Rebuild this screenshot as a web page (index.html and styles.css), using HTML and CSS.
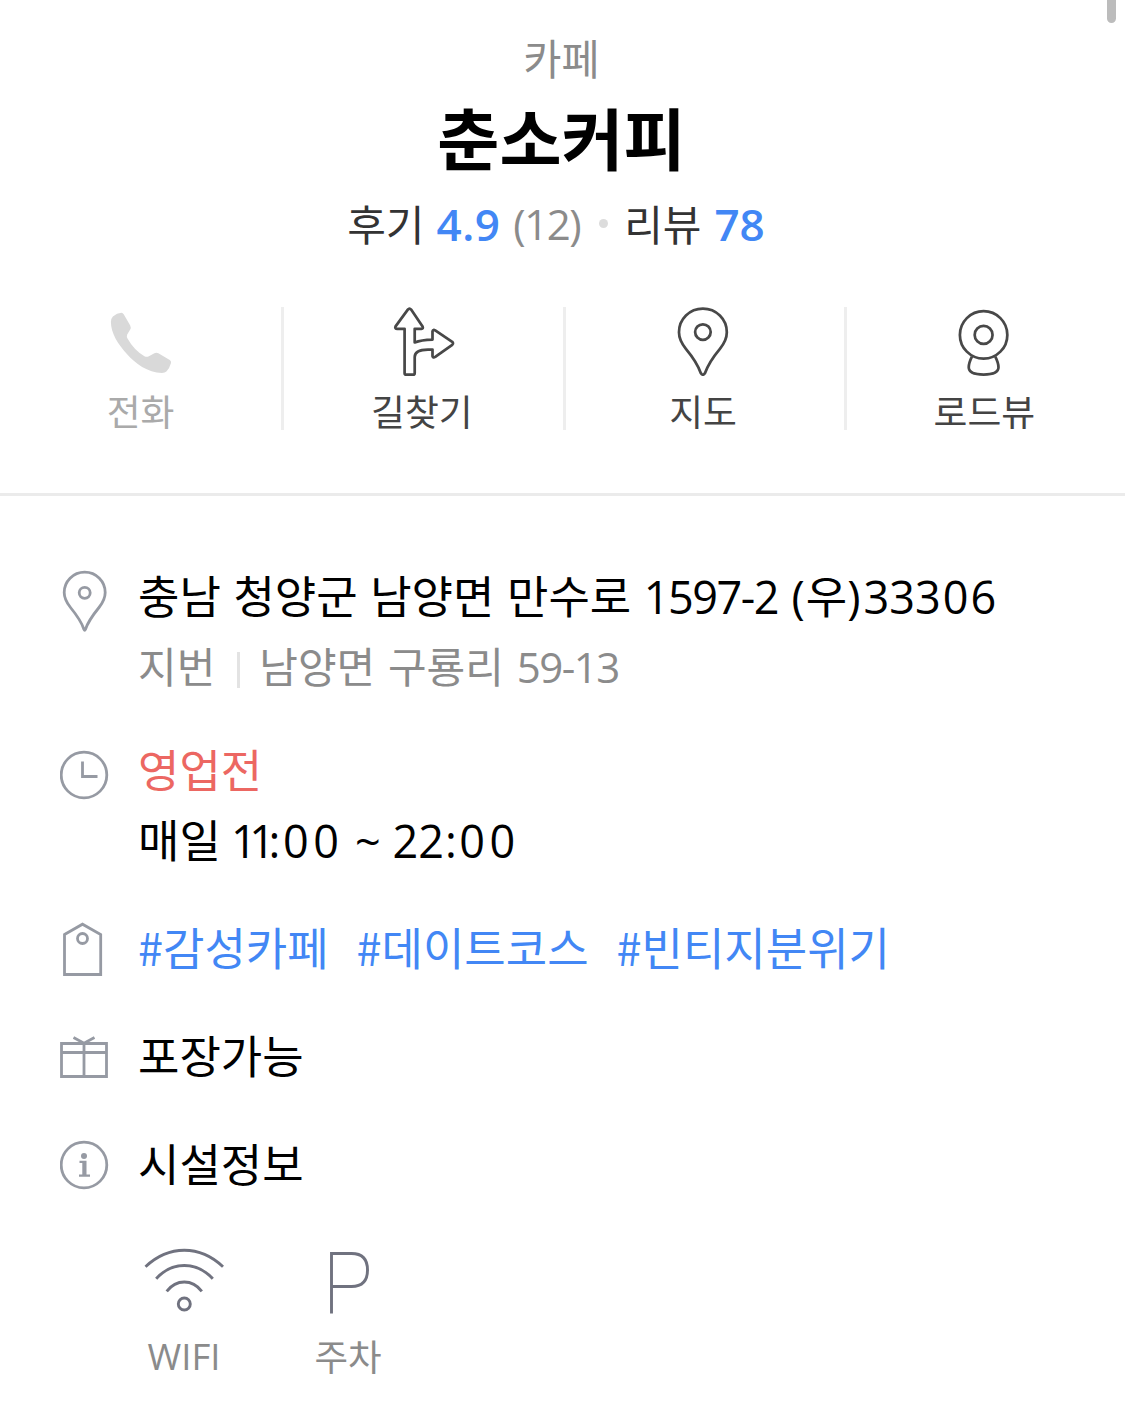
FILE: index.html
```html
<!DOCTYPE html>
<html lang="ko">
<head>
<meta charset="utf-8">
<title>춘소커피</title>
<link rel="stylesheet" href="styles.css">
</head>
<body>
<div class="scroll-thumb"></div>
<header class="place">
  <div class="category">카페</div>
  <h1 class="name">춘소커피</h1>
  <div class="rating">
    <span class="rate-label">후기</span><b class="score">4.9</b><span class="count">(12)</span><i class="dot"></i><span class="rate-label">리뷰</span><b class="reviews">78</b>
  </div>
  <nav class="actions">
    <a class="action disabled">
      <svg class="action-icon" viewBox="105.100 306 72 72"><path fill="#d9d9d9" d="M113 316.500Q117 313 121.500 312.800Q123 312.900 123.800 314.300L130.300 325.500Q131.300 327.500 130.300 329.500L127.300 334.500Q126.500 336.500 127.600 338.500Q134 350 144.500 356.300Q146.500 357.300 148.500 356.500L154.500 353.200Q156.500 352.400 158.500 353.300L169.800 359.900Q171.500 361 171.100 363Q169.800 368 166.500 371.500Q165 372.900 162 373C148 373 135 363 127 354C118 344 111 333 111 322Q111 318.500 113 316.500Z"/></svg>
      <span class="action-label">전화</span>
    </a>
    <a class="action">
      <svg class="action-icon line" viewBox="385.900 305.500 72 72"><path d="M407.300 309.200Q409 307 410.700 309.200L422.500 326.500Q423.500 328.900 421.300 329H414.400V343Q421 340.300 432.700 340V331.500Q433.300 329.300 435.500 330.600L453 342.300Q454.600 343.900 453 345.400L435.500 357.900Q433.300 359.200 432.700 357V350.300H428Q414.400 350.300 414.400 358V374.600Q414.400 376.100 412.800 376.100H405.600Q404 376.100 404 374.600V329H396.500Q393.600 328.900 394.700 326.500Z"/></svg>
      <span class="action-label">길찾기</span>
    </a>
    <a class="action">
      <svg class="action-icon line" viewBox="667.100 305.500 72 72"><path d="M703 308.200C689.300 308.200 678.400 319 678.400 332.500C678.400 339.500 681 344 685.500 349.500C693 358.500 697.500 365 700.800 374.400Q703 378 705.200 374.400C708.500 365 713 358.500 720.500 349.500C725 344 727.600 339.500 727.600 332.500C727.600 319 716.700 308.200 703 308.200Z"/><circle cx="703" cy="332.300" r="8"/></svg>
      <span class="action-label">지도</span>
    </a>
    <a class="action">
      <svg class="action-icon line" viewBox="948.400 305.500 72 72"><circle cx="984" cy="335.200" r="24.400"/><circle cx="984" cy="335.200" r="9.200"/><path d="M972 357.500Q968.700 364 968.700 368.500C968.700 374.300 976 376 984 376S999.300 374.300 999.300 368.500Q999.300 364 996 357.500"/></svg>
      <span class="action-label">로드뷰</span>
    </a>
  </nav>
</header>
<main class="info">
  <section class="row address">
    <svg class="row-icon" viewBox="60 561 50 72"><path d="M84.700 572.200C73 572.200 64.200 581.500 64.200 592.500C64.200 598.500 66.500 602.500 70.500 607.500C77 615.500 81.500 621.500 84 629.500Q84.700 631 85.400 629.500C88 621.500 92.500 615.500 99 607.500C103 602.500 105.200 598.500 105.200 592.500C105.200 581.500 96.400 572.200 84.700 572.200Z"/><circle cx="84.700" cy="592.800" r="5.500"/></svg>
    <div class="lines">
      <div class="line">충남 청양군 남양면 만수로 <span class="lat street">1597-2</span> <span class="lat open">(</span>우<span class="lat"><span class="close">)</span>33<span class="zip">30</span>6</span></div>
      <div class="line sub">지번<i class="bar"></i>남양면 구룡리 <span class="lat lot">59-13</span></div>
    </div>
  </section>
  <section class="row hours">
    <svg class="row-icon" viewBox="60 735 50 72"><circle cx="84" cy="775" r="22.800"/><path d="M82.500 761.500V776.500H97.500"/></svg>
    <div class="lines">
      <div class="line closed">영업전</div>
      <div class="line time">매일 <span class="lat"><span class="ones">11</span><span class="colon">:</span><span class="zeros">00</span> ~ 22<span class="colon">:</span><span class="zeros">00</span></span></div>
    </div>
  </section>
  <section class="row">
    <svg class="row-icon" viewBox="60 913 50 72"><path d="M64.500 934.500L82.500 924.200L100.700 934.500V974.500H64.500Z"/><circle cx="82.500" cy="938.500" r="5"/></svg>
    <div class="line tags"><a>#감성카페</a><a>#데이트코스</a><a>#빈티지분위기</a></div>
  </section>
  <section class="row">
    <svg class="row-icon" viewBox="60 1021 50 72"><path d="M61.500 1043.500H106.500V1076.500H61.500ZM61.500 1052.500H106.500M84 1043.500V1076.500M73.500 1037.500L84 1043.200L94.500 1037.500"/></svg>
    <div class="line">포장가능</div>
  </section>
  <section class="row facility-head">
    <svg class="row-icon" viewBox="60 1129 50 72"><circle cx="84" cy="1165" r="22.800"/><circle class="solid" cx="84" cy="1156" r="3"/><path class="solid" d="M79.500 1160.700H86.500V1174.500H90V1176.700H79V1174.500H82.300V1163H79.500Z"/></svg>
    <div class="line">시설정보</div>
  </section>
  <ul class="facilities">
    <li class="facility">
      <svg class="facility-icon" viewBox="138 1247 92 70"><path d="M145.500 1266.800Q163 1250.300 184.300 1250.300T223 1266.800M156.200 1278.800Q168 1265.500 184.300 1265.500T212.800 1278.800M166.700 1291.300Q174 1282 184.300 1282T201.800 1291.300"/><circle cx="184.300" cy="1304" r="6"/></svg>
      <span class="facility-label lat">WIFI</span>
    </li>
    <li class="facility">
      <svg class="facility-icon" viewBox="302 1247 92 70"><path d="M331.500 1313.500V1253.500H351.500C363 1253.500 367.500 1260 367.500 1270S363 1286.500 351.500 1286.500H331.500"/></svg>
      <span class="facility-label">주차</span>
    </li>
  </ul>
</main>
</body>
</html>
```
FILE: styles.css
```css
* { box-sizing: border-box; }
body {
  margin: 0;
  background: #fff;
  color: #000;
  font-family: "Noto Sans CJK KR", sans-serif;
  font-size: 45px;
  height: 1427px;
  overflow: hidden;
}
.lat { font-family: "Open Sans", "Noto Sans", sans-serif; }

.scroll-thumb {
  position: absolute;
  top: -20px;
  right: 9px;
  width: 9px;
  height: 43px;
  border-radius: 5px;
  background: #bcbcbc;
}

.place {
  height: 496px;
  padding-top: 27px;
  border-bottom: 3px solid #ebebeb;
  text-align: center;
}
.category { height: 60px; padding-right: 2px; line-height: 60px; font-size: 41.500px; color: #8b8b8b; }
.name {
  height: 90px;
  line-height: 90px;
  margin: 4px 0 12px;
  padding-right: 2px;
  font-size: 67.500px;
  font-weight: 700;
}
.rating {
  display: flex;
  justify-content: center;
  align-items: center;
  height: 60px;
  padding-right: 13px;
  line-height: 60px;
  font-size: 42px;
  color: #333;
}
.rating b, .count { padding-top: 1px; font-family: "Open Sans", "Noto Sans", sans-serif; }
.rating b { color: #4287f5; font-size: 44px; font-weight: 600; }
.score { margin-left: 12px; letter-spacing: 0.500px; }
.count { margin-left: 13px; color: #8b8b8b; letter-spacing: -1.500px; }
.dot { width: 9px; height: 9px; margin: 0 16px 0 19px; border-radius: 50%; background: #dcdcdc; }
.reviews { margin-left: 13px; }

.actions { display: grid; grid-template: 123px / repeat(4, 1fr); height: 123px; margin-top: 54px; }
.action { display: flex; flex-direction: column; align-items: center; height: 123px; color: #444; }
.action + .action { box-shadow: inset 3px 0 #eee; }
.action-icon { width: 72px; height: 72px; margin-top: -1px; flex: none; }
.action-icon.line { fill: none; stroke: #484848; stroke-width: 2.800; stroke-linejoin: round; }
.action-label { flex: none; height: 44px; margin-top: 11.500px; line-height: 44px; font-size: 36.800px; }
.action.disabled { color: #aaa; }
.disabled .action-label { margin-top: 10px; }

.info { padding: 65px 60px 0; }
.row { display: grid; grid-template-columns: 50px 1fr; column-gap: 28px; margin-bottom: 38px; }
.row.address { margin-bottom: 34px; }
.row.facility-head { margin-bottom: 48px; }
.row-icon { width: 50px; height: 72px; margin-bottom: -2px; fill: none; stroke: #969aa3; stroke-width: 2.800; }
.row-icon .solid { fill: #969aa3; stroke: none; }
.line { height: 70px; line-height: 68px; white-space: nowrap; }
.street { letter-spacing: -1.500px; }
.open { margin: 0 1px; }
.close { letter-spacing: 3px; }
.zip { letter-spacing: 2px; }
.sub { font-size: 42px; word-spacing: 1px; color: #8b8b8b; }
.lot { letter-spacing: -1.500px; }
.bar { display: inline-block; width: 3px; height: 36px; margin: 0 19px 0 22px; vertical-align: -5px; background: #e3e3e3; }
.closed { color: #ec6762; }
.time { word-spacing: -2.500px; }
.time .lat { word-spacing: 0; }
.ones { letter-spacing: -7.400px; }
.colon { margin-left: 1px; letter-spacing: 2.500px; }
.zeros { letter-spacing: 4.500px; }
.tags { display: flex; gap: 28px; color: #4287f5; }

.facilities { display: flex; gap: 72px; margin: 0 0 0 78px; padding: 0; list-style: none; }
.facility { display: flex; flex-direction: column; align-items: center; width: 92px; }
.facility-icon { width: 92px; height: 70px; fill: none; stroke: #70727f; stroke-width: 2.900; }
.facility-label { height: 44px; margin-top: 17px; line-height: 44px; font-size: 36.500px; color: #8b8b8b; }
```
